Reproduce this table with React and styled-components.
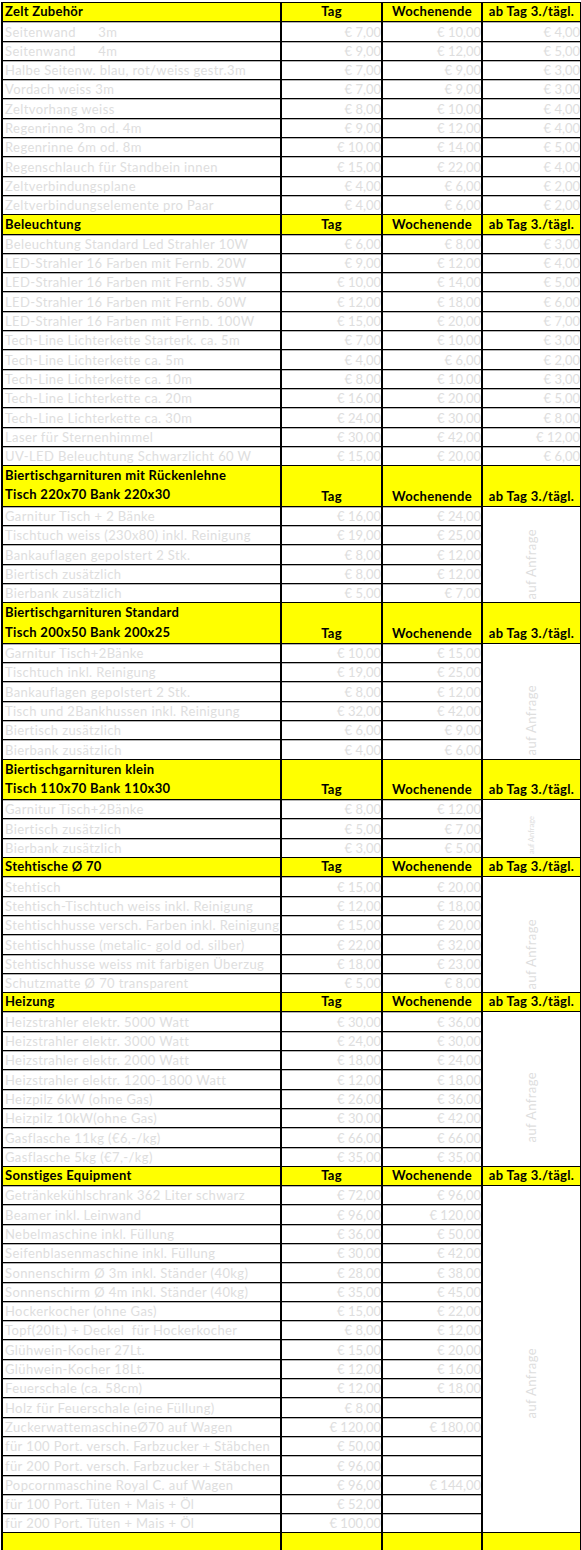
import styled, { createGlobalStyle } from 'styled-components';

const GlobalStyle = createGlobalStyle`
	html, body {
		margin: 0;
		padding: 0;
		background: #fff;
	}
	body {
		font-family: 'Lato', 'Liberation Sans', sans-serif;
	}
`;

const Page = styled.div`
	padding: 2px 0 0 1px;
	width: 581px;
	box-sizing: border-box;
`;

const Sheet = styled.table`
	width: 579px;
	table-layout: fixed;
	border-collapse: collapse;
	font-size: 13px;
`;

const Row = styled.tr`
	height: ${p => (p.$double ? 38.6 : 19.3)}px;
`;

const HeadCell = styled.th`
	background: #ffff00;
	border: 1px solid #000;
	border-left-width: 2px;
	border-right-width: 2px;
	color: #000;
	font-weight: 700;
	letter-spacing: 0.3px;
	text-align: ${p => p.$align || 'center'};
	vertical-align: bottom;
	padding: 0 2px 1px;
	line-height: 17px;
	white-space: nowrap;
	overflow: hidden;
`;

const HeadLine = styled.div`
	height: 19.3px;
	line-height: 19.3px;
`;

const Cell = styled.td`
	border: 1px solid #000;
	border-left-width: 2px;
	border-right-width: 2px;
	box-shadow: inset 0 1px 0 #b4b4b4;
	color: #dedede;
	letter-spacing: ${p => (p.$num ? '0' : '0.4px')};
	text-align: ${p => (p.$num ? 'right' : 'left')};
	vertical-align: bottom;
	padding: 0 ${p => (p.$num ? '0' : '2px')} 0 2px;
	line-height: 17px;
	white-space: pre;
	overflow: hidden;
`;

const NoteCell = styled.td`
	border: 1px solid #000;
	border-left-width: 2px;
	border-right-width: 2px;
	vertical-align: ${p => (p.$bottom ? 'bottom' : 'middle')};
	text-align: center;
	padding: ${p => p.$pad || '0'};
	overflow: hidden;
`;

const NoteText = styled.span`
	display: inline-block;
	writing-mode: vertical-rl;
	transform: rotate(180deg);
	color: #dedede;
	font-size: ${p => (p.$small ? 7.5 : 13)}px;
	letter-spacing: ${p => (p.$small ? 0 : 0.4)}px;
	line-height: 1;
	white-space: nowrap;
`;

const price = v => (v ? `€ ${v}` : '');

const sections = [
	{
		title: ['Zelt Zubehör'],
		rows: [
			['Seitenwand      3m', '7,00', '10,00', '4,00'],
			['Seitenwand      4m', '9,00', '12,00', '5,00'],
			['Halbe Seitenw. blau, rot/weiss gestr.3m', '7,00', '9,00', '3,00'],
			['Vordach weiss 3m', '7,00', '9,00', '3,00'],
			['Zeltvorhang weiss', '8,00', '10,00', '4,00'],
			['Regenrinne 3m od. 4m', '9,00', '12,00', '4,00'],
			['Regenrinne 6m od. 8m', '10,00', '14,00', '5,00'],
			['Regenschlauch für Standbein innen', '15,00', '22,00', '4,00'],
			['Zeltverbindungsplane', '4,00', '6,00', '2,00'],
			['Zeltverbindungselemente pro Paar', '4,00', '6,00', '2,00'],
		],
	},
	{
		title: ['Beleuchtung'],
		rows: [
			['Beleuchtung Standard Led Strahler 10W', '6,00', '8,00', '3,00'],
			['LED-Strahler 16 Farben mit Fernb. 20W', '9,00', '12,00', '4,00'],
			['LED-Strahler 16 Farben mit Fernb. 35W', '10,00', '14,00', '5,00'],
			['LED-Strahler 16 Farben mit Fernb. 60W', '12,00', '18,00', '6,00'],
			['LED-Strahler 16 Farben mit Fernb. 100W', '15,00', '20,00', '7,00'],
			['Tech-Line Lichterkette Starterk. ca. 5m', '7,00', '10,00', '3,00'],
			['Tech-Line Lichterkette ca. 5m', '4,00', '6,00', '2,00'],
			['Tech-Line Lichterkette ca. 10m', '8,00', '10,00', '3,00'],
			['Tech-Line Lichterkette ca. 20m', '16,00', '20,00', '5,00'],
			['Tech-Line Lichterkette ca. 30m', '24,00', '30,00', '8,00'],
			['Laser für Sternenhimmel', '30,00', '42,00', '12,00'],
			['UV-LED Beleuchtung Schwarzlicht 60 W', '15,00', '20,00', '6,00'],
		],
	},
	{
		title: ['Biertischgarnituren mit Rückenlehne', 'Tisch 220x70 Bank 220x30'],
		note: { bottom: true },
		rows: [
			['Garnitur Tisch + 2 Bänke', '16,00', '24,00'],
			['Tischtuch weiss (230x80) inkl. Reinigung', '19,00', '25,00'],
			['Bankauflagen gepolstert 2 Stk.', '8,00', '12,00'],
			['Biertisch zusätzlich', '8,00', '12,00'],
			['Bierbank zusätzlich', '5,00', '7,00'],
		],
	},
	{
		title: ['Biertischgarnituren Standard', 'Tisch 200x50 Bank 200x25'],
		note: { bottom: true },
		rows: [
			['Garnitur Tisch+2Bänke', '10,00', '15,00'],
			['Tischtuch inkl. Reinigung', '19,00', '25,00'],
			['Bankauflagen gepolstert 2 Stk.', '8,00', '12,00'],
			['Tisch und 2Bankhussen inkl. Reinigung', '32,00', '42,00'],
			['Biertisch zusätzlich', '6,00', '9,00'],
			['Bierbank zusätzlich', '4,00', '6,00'],
		],
	},
	{
		title: ['Biertischgarnituren klein', 'Tisch 110x70 Bank 110x30'],
		note: { bottom: true, small: true },
		rows: [
			['Garnitur Tisch+2Bänke', '8,00', '12,00'],
			['Biertisch zusätzlich', '5,00', '7,00'],
			['Bierbank zusätzlich', '3,00', '5,00'],
		],
	},
	{
		title: ['Stehtische Ø 70'],
		note: { bottom: true },
		rows: [
			['Stehtisch', '15,00', '20,00'],
			['Stehtisch-Tischtuch weiss inkl. Reinigung', '12,00', '18,00'],
			['Stehtischhusse versch. Farben inkl. Reinigung', '15,00', '20,00'],
			['Stehtischhusse (metalic- gold od. silber)', '22,00', '32,00'],
			['Stehtischhusse weiss mit farbigen Überzug', '18,00', '23,00'],
			['Schutzmatte Ø 70 transparent', '5,00', '8,00'],
		],
	},
	{
		title: ['Heizung'],
		note: { pad: '40px 0 0' },
		rows: [
			['Heizstrahler elektr. 5000 Watt', '30,00', '36,00'],
			['Heizstrahler elektr. 3000 Watt', '24,00', '30,00'],
			['Heizstrahler elektr. 2000 Watt', '18,00', '24,00'],
			['Heizstrahler elektr. 1200-1800 Watt', '12,00', '18,00'],
			['Heizpilz 6kW (ohne Gas)', '26,00', '36,00'],
			['Heizpilz 10kW(ohne Gas)', '30,00', '42,00'],
			['Gasflasche 11kg (€6,-/kg)', '66,00', '66,00'],
			['Gasflasche 5kg (€7,-/kg)', '35,00', '35,00'],
		],
	},
	{
		title: ['Sonstiges Equipment'],
		note: { pad: '50px 0 0' },
		rows: [
			['Getränkekühlschrank 362 Liter schwarz', '72,00', '96,00'],
			['Beamer inkl. Leinwand', '96,00', '120,00'],
			['Nebelmaschine inkl. Füllung', '36,00', '50,00'],
			['Seifenblasenmaschine inkl. Füllung', '30,00', '42,00'],
			['Sonnenschirm Ø 3m inkl. Ständer (40kg)', '28,00', '38,00'],
			['Sonnenschirm Ø 4m inkl. Ständer (40kg)', '35,00', '45,00'],
			['Hockerkocher (ohne Gas)', '15,00', '22,00'],
			['Topf(20lt.) + Deckel  für Hockerkocher', '8,00', '12,00'],
			['Glühwein-Kocher 27Lt.', '15,00', '20,00'],
			['Glühwein-Kocher 18Lt.', '12,00', '16,00'],
			['Feuerschale (ca. 58cm)', '12,00', '18,00'],
			['Holz für Feuerschale (eine Füllung)', '8,00', ''],
			['ZuckerwattemaschineØ70 auf Wagen', '120,00', '180,00'],
			['für 100 Port. versch. Farbzucker + Stäbchen', '50,00', ''],
			['für 200 Port. versch. Farbzucker + Stäbchen', '96,00', ''],
			['Popcornmaschine Royal C. auf Wagen', '96,00', '144,00'],
			['für 100 Port. Tüten + Mais + Öl', '52,00', ''],
			['für 200 Port. Tüten + Mais + Öl', '100,00', ''],
		],
	},
];

const Section = ({ section }) => {
	const double = section.title.length > 1;
	const note = section.note;

	return (
		<>
			<Row $double={double}>
				<HeadCell $align="left">
					{double ? section.title.map(line => <HeadLine key={line}>{line}</HeadLine>) : section.title[0]}
				</HeadCell>
				<HeadCell>Tag</HeadCell>
				<HeadCell>Wochenende</HeadCell>
				<HeadCell>ab Tag 3./tägl.</HeadCell>
			</Row>
			{section.rows.map((row, index) => (
				<Row key={index}>
					<Cell>{row[0]}</Cell>
					<Cell $num>{price(row[1])}</Cell>
					<Cell $num>{price(row[2])}</Cell>
					{!note && <Cell $num>{price(row[3])}</Cell>}
					{note && index === 0 && (
						<NoteCell rowSpan={section.rows.length} $bottom={note.bottom} $pad={note.pad}>
							<NoteText $small={note.small}>auf Anfrage</NoteText>
						</NoteCell>
					)}
				</Row>
			))}
		</>
	);
};

const App = () => {
	return (
		<Page>
			<GlobalStyle />
			<Sheet>
				<colgroup>
					<col style={{ width: 279 }} />
					<col style={{ width: 101 }} />
					<col style={{ width: 100 }} />
					<col style={{ width: 99 }} />
				</colgroup>
				<tbody>
					{sections.map(section => (
						<Section key={section.title[0]} section={section} />
					))}
					<Row>
						<HeadCell />
						<HeadCell />
						<HeadCell />
						<HeadCell />
					</Row>
				</tbody>
			</Sheet>
		</Page>
	);
};

export default App;
